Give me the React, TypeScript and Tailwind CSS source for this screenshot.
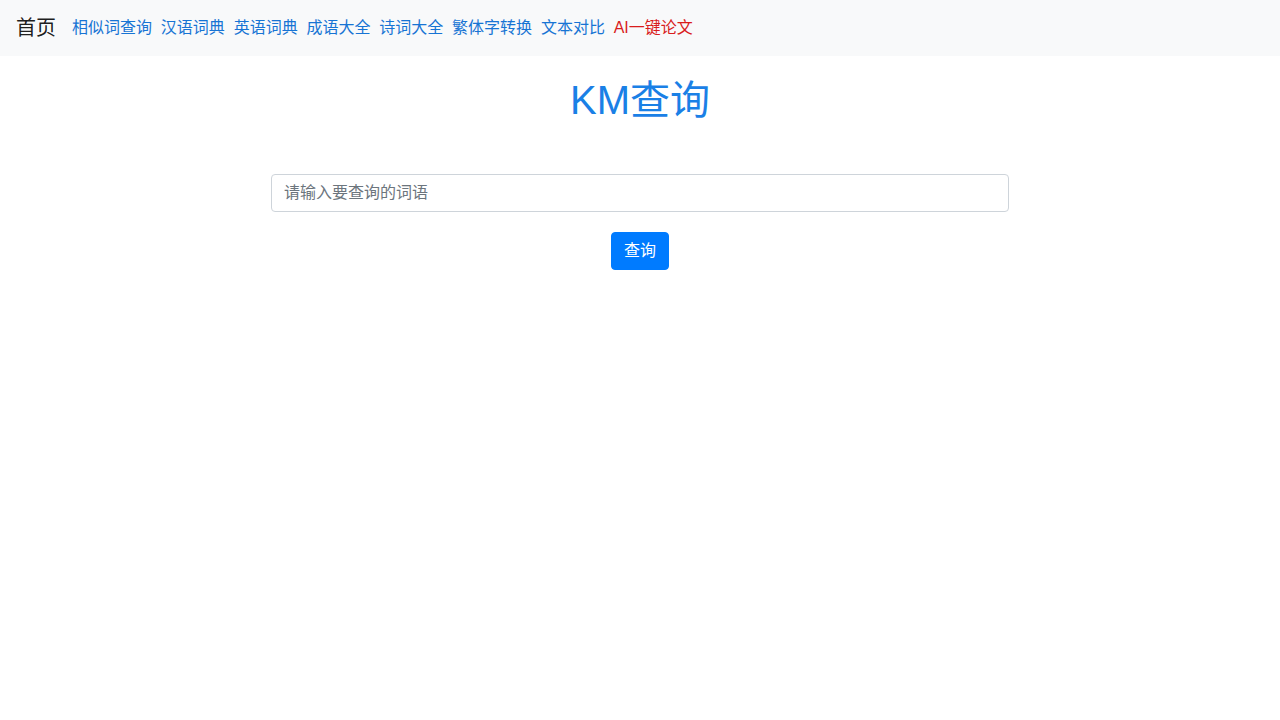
const links = ['相似词查询', '汉语词典', '英语词典', '成语大全', '诗词大全', '繁体字转换', '文本对比']

export default function App() {
  return (
    <div className="min-h-screen bg-white font-['Liberation_Sans','Noto_Sans_CJK_SC',sans-serif] text-[#212529]">
      <nav className="flex h-14 items-center bg-[#f8f9fa] px-4">
        <a className="mr-4 text-xl text-black/90">首页</a>
        <div className="flex items-center gap-[8.8px] text-base">
          {links.map((l) => (
            <a key={l} className="text-[#1774d4]">
              {l}
            </a>
          ))}
          <a className="text-[#d91c1c]">AI一键论文</a>
        </div>
      </nav>

      <div className="flex flex-col items-center">
        <h1 className="mt-5 text-[40px] leading-[48px] text-[#1a80e6]">KM查询</h1>
        <input
          type="text"
          placeholder="请输入要查询的词语"
          className="mt-[50px] h-[38px] w-[738px] rounded border border-[#ced4da] px-3 text-base placeholder:text-[#6c757d] outline-none"
        />
        <button className="mt-5 h-[38px] rounded border border-[#007bff] bg-[#007bff] px-3 text-base text-white">
          查询
        </button>
      </div>
    </div>
  )
}
